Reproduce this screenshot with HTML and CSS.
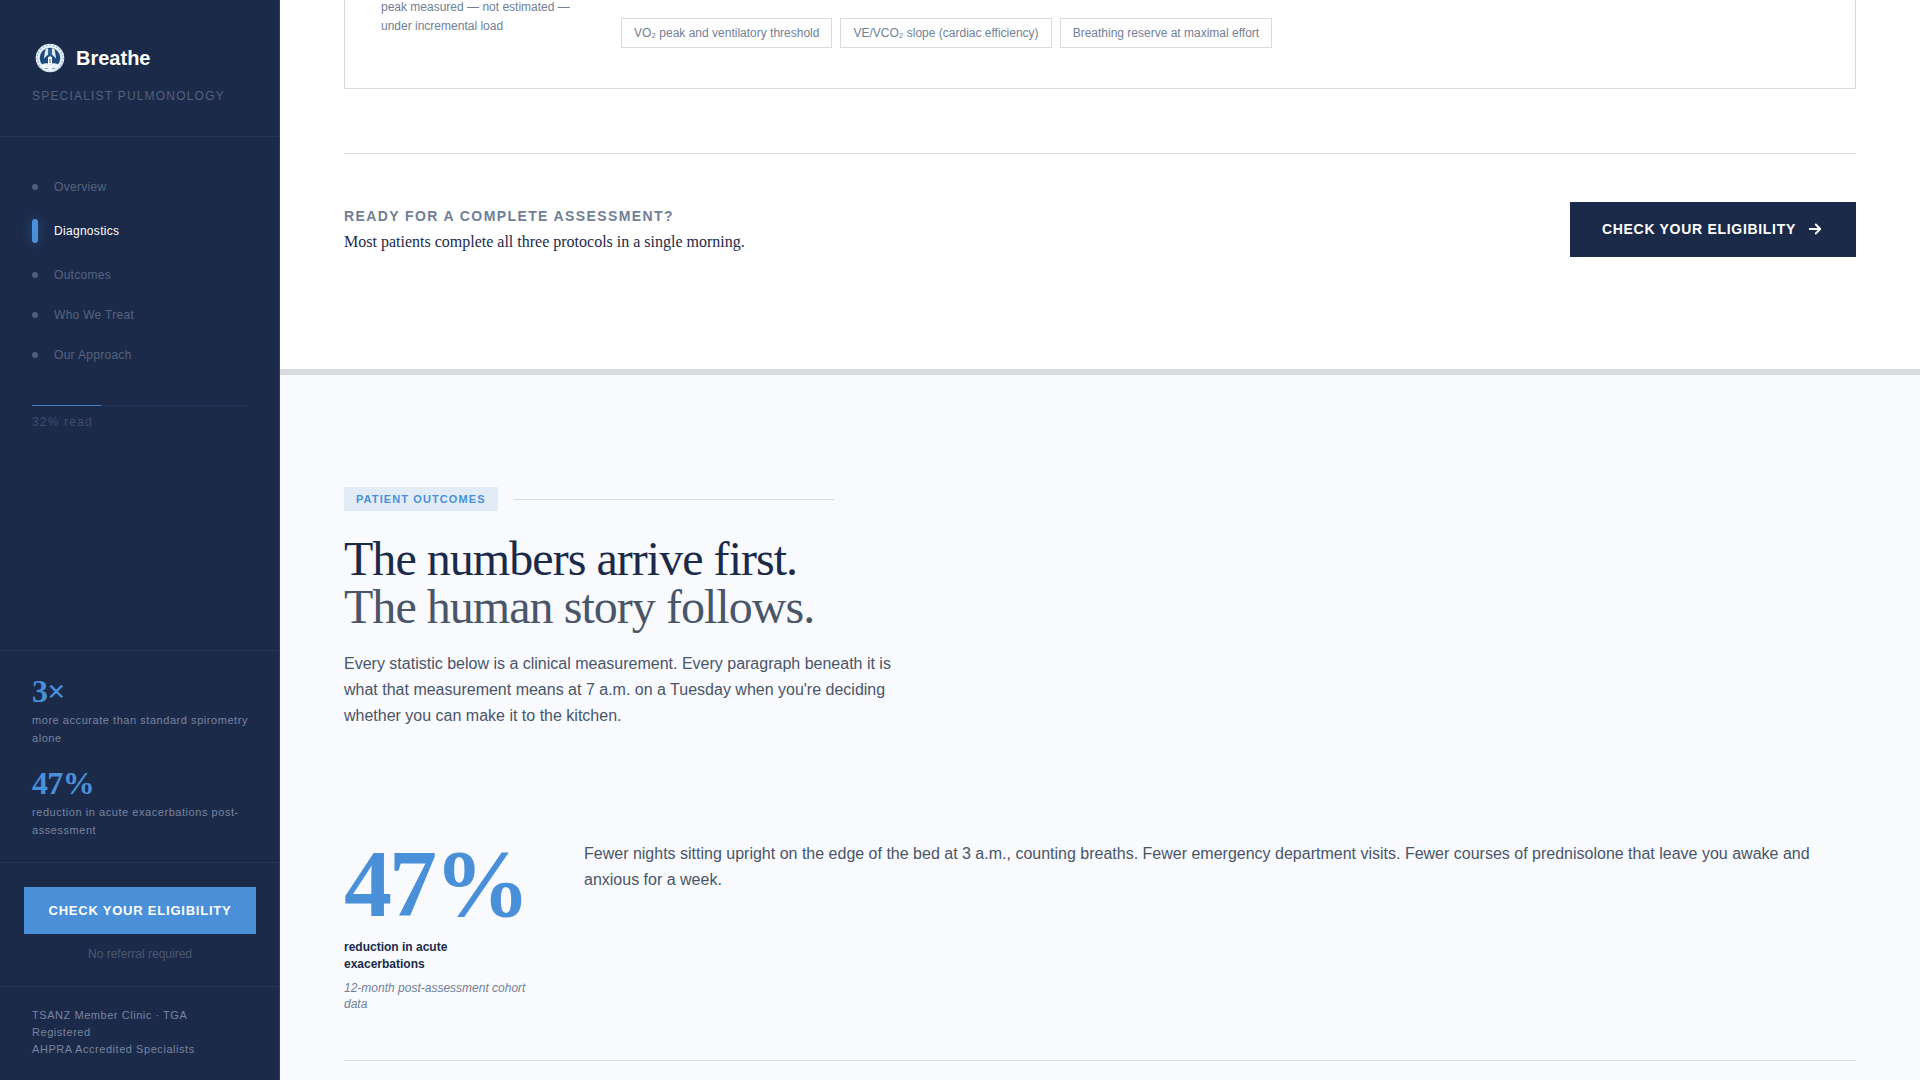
FILE: index.html
```html
<!DOCTYPE html>
<html lang="en">
<head>
  <meta charset="UTF-8" />
  <meta name="viewport" content="width=device-width, initial-scale=1.0"/>
  <title>Breathe - Specialist Pulmonology</title>
  <link rel="stylesheet" href="styles.css">
</head>
<body>

  <aside class="sidebar">
    <div class="brand">
      <a class="brand-link" href="#overview">
        <svg class="brand-logo" viewBox="0 0 36 36" aria-hidden="true">
          <circle cx="18" cy="18" r="12.300" fill="#1d4a7a" stroke="#e2eff7" stroke-width="4"/>
          <circle cx="18" cy="18" r="12.800" fill="none" stroke="#86afcf" stroke-width="1.300" stroke-dasharray="1.300 2.200"/>
          <path d="M13.800 8.500h2.400v6l-4.200 4 .6-5zM22.200 8.500h-2.400v6l4.200 4-.6-5z" fill="#dcebf5"/>
          <path d="M18 9v7" stroke="#3f78ad" stroke-width="1"/>
          <path d="M16 24v-6.500l2-1.500 2 1.500V24z" fill="#fff"/>
          <path d="M17.500 19h1v4h-1z" fill="#2b5f92"/>
          <path d="M8.500 26c3-3.200 6-3.200 9.500-1.800 3.500-1.400 6.500-1.400 9.500 1.800-4.500 6.500-14.500 6.500-19 0z" fill="#eef6fb"/>
          <path d="M13 28.500h3M20 28.500h3" stroke="#7ba6c9" stroke-width="1"/>
        </svg>
        <span class="brand-name">Breathe</span>
      </a>
      <p class="brand-tag">Specialist Pulmonology</p>
    </div>

    <nav class="nav">
      <a class="nav-item" href="#overview"><span class="dot"></span>Overview</a>
      <a class="nav-item active" href="#diagnostics"><span class="dot"></span>Diagnostics</a>
      <a class="nav-item" href="#outcomes"><span class="dot"></span>Outcomes</a>
      <a class="nav-item" href="#who"><span class="dot"></span>Who We Treat</a>
      <a class="nav-item" href="#approach"><span class="dot"></span>Our Approach</a>
    </nav>

    <div class="progress">
      <div class="progress-track"><div class="progress-fill" style="width: 32%"></div></div>
      <span class="progress-label">32% read</span>
    </div>

    <div class="side-stats">
      <div>
        <div class="side-number">3×</div>
        <p class="side-label">more accurate than standard spirometry alone</p>
      </div>
      <div>
        <div class="side-number">47%</div>
        <p class="side-label">reduction in acute exacerbations post-assessment</p>
      </div>
    </div>

    <div class="side-cta">
      <button class="btn btn-blue" type="button">Check Your Eligibility</button>
      <p class="side-note">No referral required</p>
    </div>

    <div class="side-footer">
      TSANZ Member Clinic · TGA Registered<br>AHPRA Accredited Specialists
    </div>
  </aside>

  <main class="main">
    <section class="diagnostics" id="diagnostics">
      <div class="protocol">
        <p class="protocol-note">peak measured — not estimated — under incremental load</p>
        <ul class="tags">
          <li>VO₂ peak and ventilatory threshold</li>
          <li>VE/VCO₂ slope (cardiac efficiency)</li>
          <li>Breathing reserve at maximal effort</li>
        </ul>
      </div>

      <div class="assess">
        <div>
          <p class="assess-title">Ready for a complete assessment?</p>
          <p class="assess-text">Most patients complete all three protocols in a single morning.</p>
        </div>
        <button class="btn btn-navy" type="button">
          Check Your Eligibility
          <svg width="18" height="18" viewBox="0 0 24 24" fill="none" stroke="currentColor" stroke-width="2.500" stroke-linecap="round" stroke-linejoin="round" aria-hidden="true">
            <path d="M5 12h14M13 6l6 6-6 6"/>
          </svg>
        </button>
      </div>
    </section>

    <section class="outcomes" id="outcomes">
      <div class="eyebrow">
        <span class="badge">Patient Outcomes</span>
        <span class="rule"></span>
      </div>
      <h2>The numbers arrive first.<br><span>The human story follows.</span></h2>
      <p class="lead">Every statistic below is a clinical measurement. Every paragraph beneath it is what that measurement means at 7 a.m. on a Tuesday when you're deciding whether you can make it to the kitchen.</p>

      <article class="outcome">
        <div>
          <div class="outcome-number">47%</div>
          <p class="outcome-label">reduction in acute exacerbations</p>
          <p class="outcome-source">12-month post-assessment cohort data</p>
        </div>
        <p class="outcome-text">Fewer nights sitting upright on the edge of the bed at 3 a.m., counting breaths. Fewer emergency department visits. Fewer courses of prednisolone that leave you awake and anxious for a week.</p>
      </article>
    </section>
  </main>

</body>
</html>
```
FILE: styles.css
```css
:root {
  --navy: #1b2a49;
  --blue: #4a90d9;
  --slate: #718096;
  --text: #4a5568;
  --line: #d8dce1;
  --side-line: rgba(255, 255, 255, 0.06);
  --sans: "Liberation Sans", Arial, sans-serif;
  --serif: "Liberation Serif", Georgia, serif;
}

* {
  box-sizing: border-box;
}

body {
  margin: 0;
  min-height: 100vh;
  display: flex;
  font-family: var(--sans);
  background: #f8fafe;
}

p, h2, ul {
  margin: 0;
  padding: 0;
}

a {
  color: inherit;
  text-decoration: none;
}

/* Sidebar */
.sidebar {
  position: sticky;
  top: 0;
  flex: 0 0 280px;
  height: 100vh;
  display: flex;
  flex-direction: column;
  background: var(--navy);
  border-right: 1px solid #223e63;
}

.brand {
  padding: 40px 32px 32px;
  border-bottom: 1px solid var(--side-line);
}

.brand-link {
  display: flex;
  align-items: center;
  gap: 8px;
}

.brand-logo {
  width: 36px;
  height: 36px;
}

.brand-name {
  font-size: 20px;
  font-weight: 700;
  color: #fff;
}

.brand-tag {
  margin-top: 12px;
  font-size: 12px;
  line-height: 16px;
  letter-spacing: 0.1em;
  white-space: nowrap;
  text-transform: uppercase;
  color: #54617c;
}

.nav {
  padding: 30px 32px;
}

.nav-item {
  display: flex;
  align-items: center;
  gap: 16px;
  padding: 12px 0;
  font-size: 12px;
  line-height: 16px;
  letter-spacing: 0.3px;
  color: #56637e;
}

.dot {
  width: 6px;
  height: 6px;
  border-radius: 3px;
  background: #4f5d7a;
}

.nav-item.active {
  color: #fff;
}

.active .dot {
  height: 24px;
  background: var(--blue);
  box-shadow: 0 0 12px rgba(74, 144, 217, 0.4);
}

.progress {
  padding: 0 31px 0 32px;
}

.progress-track {
  height: 1px;
  background: #23345a;
}

.progress-fill {
  height: 1px;
  background: #4680c3;
}

.progress-label {
  display: block;
  margin-top: 8px;
  font-size: 12px;
  line-height: 16px;
  letter-spacing: 0.1em;
  color: #404e69;
}

.side-stats {
  display: flex;
  flex-direction: column;
  gap: 20px;
  margin-top: auto;
  padding: 24px 31px 23px 32px;
  border-top: 1px solid var(--side-line);
}

.side-number {
  font-family: var(--serif);
  font-size: 32px;
  font-weight: 700;
  line-height: 32px;
  letter-spacing: -0.02em;
  color: var(--blue);
}

.side-label {
  margin-top: 4px;
  font-size: 11px;
  line-height: 18px;
  letter-spacing: 0.05em;
  color: #7984a0;
}

.side-cta {
  padding: 24px 23px 24px 24px;
  border-top: 1px solid var(--side-line);
}

.btn {
  display: flex;
  align-items: center;
  justify-content: center;
  border: none;
  font-family: var(--sans);
  font-weight: 700;
  color: #fff;
  text-transform: uppercase;
  white-space: nowrap;
  cursor: pointer;
}

.btn-blue {
  width: 100%;
  padding: 16px;
  font-size: 13px;
  line-height: 15px;
  letter-spacing: 0.06em;
  background: var(--blue);
}

.side-note {
  margin-top: 12px;
  font-size: 12px;
  line-height: 16px;
  text-align: center;
  color: #4a5771;
}

.side-footer {
  padding: 20px 32px 22px;
  border-top: 1px solid var(--side-line);
  font-size: 11px;
  line-height: 17px;
  letter-spacing: 0.05em;
  color: #7984a0;
}

/* Main column */
.main {
  flex: 1;
  min-width: 0;
}

.diagnostics {
  padding: 0 64px 112px;
  background: #fff;
  border-bottom: 6px solid var(--line);
}

.protocol {
  display: grid;
  grid-template-columns: 200px 1fr;
  gap: 40px;
  align-items: end;
  margin-top: -3px;
  padding: 0 36px 40px;
  border: 1px solid var(--line);
  border-top: none;
}

.protocol-note {
  padding-top: 1px;
  padding-bottom: 12px;
  font-size: 12px;
  line-height: 19px;
  color: var(--slate);
}

.tags {
  display: flex;
  flex-wrap: wrap;
  gap: 8px;
  list-style: none;
}

.tags li {
  padding: 6px 12px;
  border: 1px solid var(--line);
  font-size: 12px;
  line-height: 16px;
  color: var(--slate);
}

.assess {
  display: flex;
  align-items: center;
  justify-content: space-between;
  margin-top: 64px;
  padding-top: 48px;
  border-top: 1px solid var(--line);
}

.assess-title {
  font-size: 14px;
  font-weight: 700;
  line-height: 22px;
  letter-spacing: 0.1em;
  text-transform: uppercase;
  color: var(--slate);
}

.assess-text {
  margin-top: 2px;
  font-family: var(--serif);
  font-size: 16px;
  line-height: 26px;
  color: var(--navy);
}

.btn-navy {
  gap: 10px;
  padding: 18px 32px 19px;
  font-size: 14px;
  line-height: 17px;
  letter-spacing: 0.05em;
  background: var(--navy);
}

.outcomes {
  padding: 112px 64px 16px;
}

.eyebrow {
  display: flex;
  align-items: center;
  gap: 16px;
}

.badge {
  padding: 4px 12px;
  font-size: 11px;
  font-weight: 700;
  line-height: 16px;
  letter-spacing: 0.1em;
  text-transform: uppercase;
  color: var(--blue);
  background: #e2ecf7;
}

.rule {
  width: 320px;
  height: 1px;
  background: var(--line);
}

h2 {
  margin-top: 24px;
  font-family: var(--serif);
  font-size: 48px;
  font-weight: 400;
  line-height: 48px;
  letter-spacing: -0.02em;
  color: var(--navy);
}

h2 span {
  color: var(--text);
}

.lead {
  max-width: 560px;
  margin-top: 20px;
  font-size: 16px;
  line-height: 26px;
  color: var(--text);
}

.outcome {
  display: grid;
  grid-template-columns: 200px 1fr;
  gap: 40px;
  margin-top: 64px;
  padding: 48px 0;
  border-bottom: 1px solid var(--line);
}

.outcome-number {
  font-family: var(--serif);
  font-size: 96px;
  font-weight: 700;
  line-height: 86px;
  letter-spacing: -0.03em;
  color: var(--blue);
}

.outcome-label {
  max-width: 160px;
  margin-top: 12px;
  font-size: 12px;
  font-weight: 700;
  line-height: 17px;
  color: var(--navy);
}

.outcome-source {
  margin-top: 7px;
  font-size: 12px;
  font-style: italic;
  line-height: 16px;
  color: var(--slate);
}

.outcome-text {
  font-size: 16px;
  line-height: 26px;
  color: var(--text);
}
```
